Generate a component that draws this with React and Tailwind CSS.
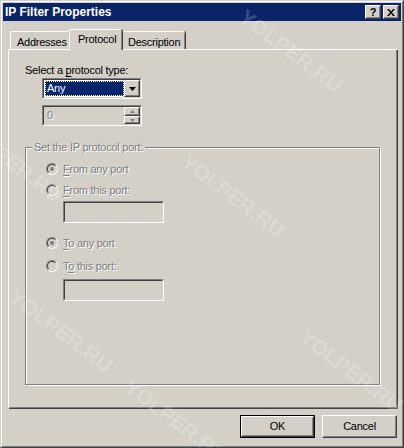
import React from 'react';

const FONT = "font-['Liberation_Sans',Arial,sans-serif]";
const DIS = 'text-[#808080] [text-shadow:1px_1px_0_#fff]';
const TXT = 'text-[11px] leading-[13px] tracking-[-0.25px]';

const Sunken = ({ className = '', inner = '', children }) => (
  <div className={`border border-t-[#808080] border-l-[#808080] border-r-white border-b-white ${className}`}>
    <div className={`h-full w-full border border-t-[#404040] border-l-[#404040] border-r-[#d4d0c8] border-b-[#d4d0c8] ${inner}`}>
      {children}
    </div>
  </div>
);

const Raised = ({ className = '', children }) => (
  <div className={`border border-t-white border-l-white border-r-[#404040] border-b-[#404040] ${className}`}>
    <div className="flex h-full w-full items-center justify-center border border-t-[#d4d0c8] border-l-[#d4d0c8] border-r-[#808080] border-b-[#808080] bg-[#d4d0c8]">
      {children}
    </div>
  </div>
);

const Radio = ({ checked }) => (
  <div className="h-[12px] w-[12px] shrink-0 rounded-full border border-t-[#808080] border-l-[#808080] border-r-white border-b-white">
    <div className="flex h-full w-full items-center justify-center rounded-full border border-t-[#404040] border-l-[#404040] border-r-[#d4d0c8] border-b-[#d4d0c8] bg-[#d4d0c8]">
      {checked && <div className="h-[4px] w-[4px] rounded-full bg-[#808080]" />}
    </div>
  </div>
);

const RadioRow = ({ checked, children, className = '' }) => (
  <div className={`flex h-[20px] items-center gap-[5px] ${className}`}>
    <Radio checked={checked} />
    <span className={`${TXT} ${DIS}`}>{children}</span>
  </div>
);

const Tab = ({ label, selected, width }) =>
  selected ? (
    <div className="relative z-10 -mx-[1px] h-[21px] rounded-t-[2px] border-l border-t border-l-white border-t-white bg-[#d4d0c8] shadow-[inset_-1px_0_0_#808080,1px_0_0_#404040]" style={{ width }}>
      <div className={`pl-[8px] pt-[3px] text-black ${TXT}`}>{label}</div>
    </div>
  ) : (
    <div className="mb-[1px] h-[18px] rounded-t-[2px] border-l border-t border-l-white border-t-white bg-[#d4d0c8] shadow-[inset_-1px_0_0_#808080,1px_0_0_#404040]" style={{ width }}>
      <div className={`pl-[6px] pt-[4px] text-black ${TXT}`}>{label}</div>
    </div>
  );

const marks = [
  { x: 290, y: 50 },
  { x: 232, y: 195 },
  { x: 10, y: 160 },
  { x: 350, y: 370 },
  { x: 175, y: 420 },
  { x: 60, y: 330 },
];

export default function App() {
  return (
    <div className={`relative h-[448px] w-[404px] overflow-hidden bg-[#d4d0c8] ${FONT} border border-t-[#d4d0c8] border-l-[#d4d0c8] border-r-[#404040] border-b-[#404040]`}>
      <div className="flex h-full w-full flex-col border border-t-white border-l-white border-r-[#808080] border-b-[#808080] p-[1px]">
        {/* title bar */}
        <div className="flex h-[18px] items-center justify-between bg-[#0a246a] pl-[2px] pr-[2px]">
          <span className="text-[12px] font-bold leading-[14px] text-white">IP Filter Properties</span>
          <div className="flex gap-[2px]">
            <Raised className="h-[14px] w-[16px]">
              <span className="text-[11px] font-bold leading-[10px] text-black">?</span>
            </Raised>
            <Raised className="h-[14px] w-[16px]">
              <svg width="8" height="7" viewBox="0 0 8 7">
                <path d="M0 0h2l2 2.5L6 0h2L5 3.5 8 7H6L4 4.5 2 7H0l3-3.5z" fill="#000" />
              </svg>
            </Raised>
          </div>
        </div>

        {/* tabs */}
        <div className="relative z-10 mb-[-1px] ml-[7px] mt-[8px] flex h-[21px] items-end">
          <Tab label="Addresses" width={60} />
          <Tab label="Protocol" width={53} selected />
          <Tab label="Description" width={64} />
        </div>

        {/* panel */}
        <div className="ml-[5px] h-[359px] w-[389px] border-l border-t border-l-white border-t-white shadow-[inset_-1px_-1px_0_#808080,1px_1px_0_#404040]">
          <div className="pl-[16px] pt-[14px]">
            <div className={`text-black ${TXT}`}>
              Select a <span className="underline underline-offset-2">p</span>rotocol type:
            </div>

            <Sunken className="ml-[17px] mt-[1px] h-[21px] w-[100px]" inner="bg-white">
              <div className="flex h-full items-center">
                <div className="ml-[1px] flex h-[15px] w-[79px] items-center bg-[#0a246a] outline outline-1 outline-dotted outline-[#ffffff] -outline-offset-1">
                  <span className={`pl-[2px] text-white ${TXT}`}>Any</span>
                </div>
                <Raised className="ml-auto h-[17px] w-[16px]">
                  <svg width="7" height="4" viewBox="0 0 7 4">
                    <path d="M0 0h7L3.5 4z" fill="#000" />
                  </svg>
                </Raised>
              </div>
            </Sunken>

            <Sunken className="ml-[17px] mt-[6px] h-[21px] w-[100px]" inner="bg-[#d4d0c8]">
              <div className="flex h-full items-center">
                <span className={`pl-[3px] ${TXT} ${DIS}`}>0</span>
                <div className="ml-auto flex h-full w-[16px] flex-col">
                  <Raised className="h-[9px] w-[16px]">
                    <svg width="5" height="3" viewBox="0 0 5 3">
                      <path d="M2.5 0L5 3H0z" fill="#808080" />
                    </svg>
                  </Raised>
                  <Raised className="h-[8px] w-[16px]">
                    <svg width="5" height="3" viewBox="0 0 5 3">
                      <path d="M0 0h5L2.5 3z" fill="#808080" />
                    </svg>
                  </Raised>
                </div>
              </div>
            </Sunken>

            {/* group box */}
            <div className="relative mt-[21px] h-[238px] w-[355px] border border-[#808080] shadow-[inset_1px_1px_0_#fff,1px_1px_0_#fff]">
              <span className={`absolute -top-[7px] left-[6px] bg-[#d4d0c8] px-[2px] ${TXT} ${DIS}`}>
                Set the IP protocol port:
              </span>
              <div className="pl-[20px] pt-[11px]">
                <RadioRow checked>
                  <span className="underline underline-offset-2">F</span>rom any port
                </RadioRow>
                <RadioRow className="mt-[1px]">
                  <span className="underline underline-offset-2">F</span>rom this port:
                </RadioRow>
                <Sunken className="ml-[17px] mt-[1px] h-[22px] w-[101px]" inner="bg-[#d4d0c8]" />
                <RadioRow checked className="mt-[10px]">
                  <span className="underline underline-offset-2">T</span>o any port
                </RadioRow>
                <RadioRow className="mt-[3px]">
                  T<span className="underline underline-offset-2">o</span> this port:
                </RadioRow>
                <Sunken className="ml-[17px] mt-[3px] h-[22px] w-[101px]" inner="bg-[#d4d0c8]" />
              </div>
            </div>
          </div>
        </div>

        {/* buttons */}
        <div className="mt-[7px] flex justify-end gap-[7px] pr-[4px]">
          <div className="h-[23px] w-[75px] border border-black">
            <Raised className="h-full w-full">
              <span className={`text-black ${TXT}`}>OK</span>
            </Raised>
          </div>
          <Raised className="h-[23px] w-[75px]">
            <span className={`text-black ${TXT}`}>Cancel</span>
          </Raised>
        </div>
      </div>

      {/* watermark */}
      {marks.map((m, i) => (
        <span
          key={i}
          aria-hidden="true"
          className="pointer-events-none absolute -translate-x-1/2 -translate-y-1/2 rotate-[37deg] whitespace-nowrap text-[21px] font-bold text-white/20"
          style={{ left: m.x, top: m.y }}
        >
          YOLPER.RU
        </span>
      ))}
    </div>
  );
}
